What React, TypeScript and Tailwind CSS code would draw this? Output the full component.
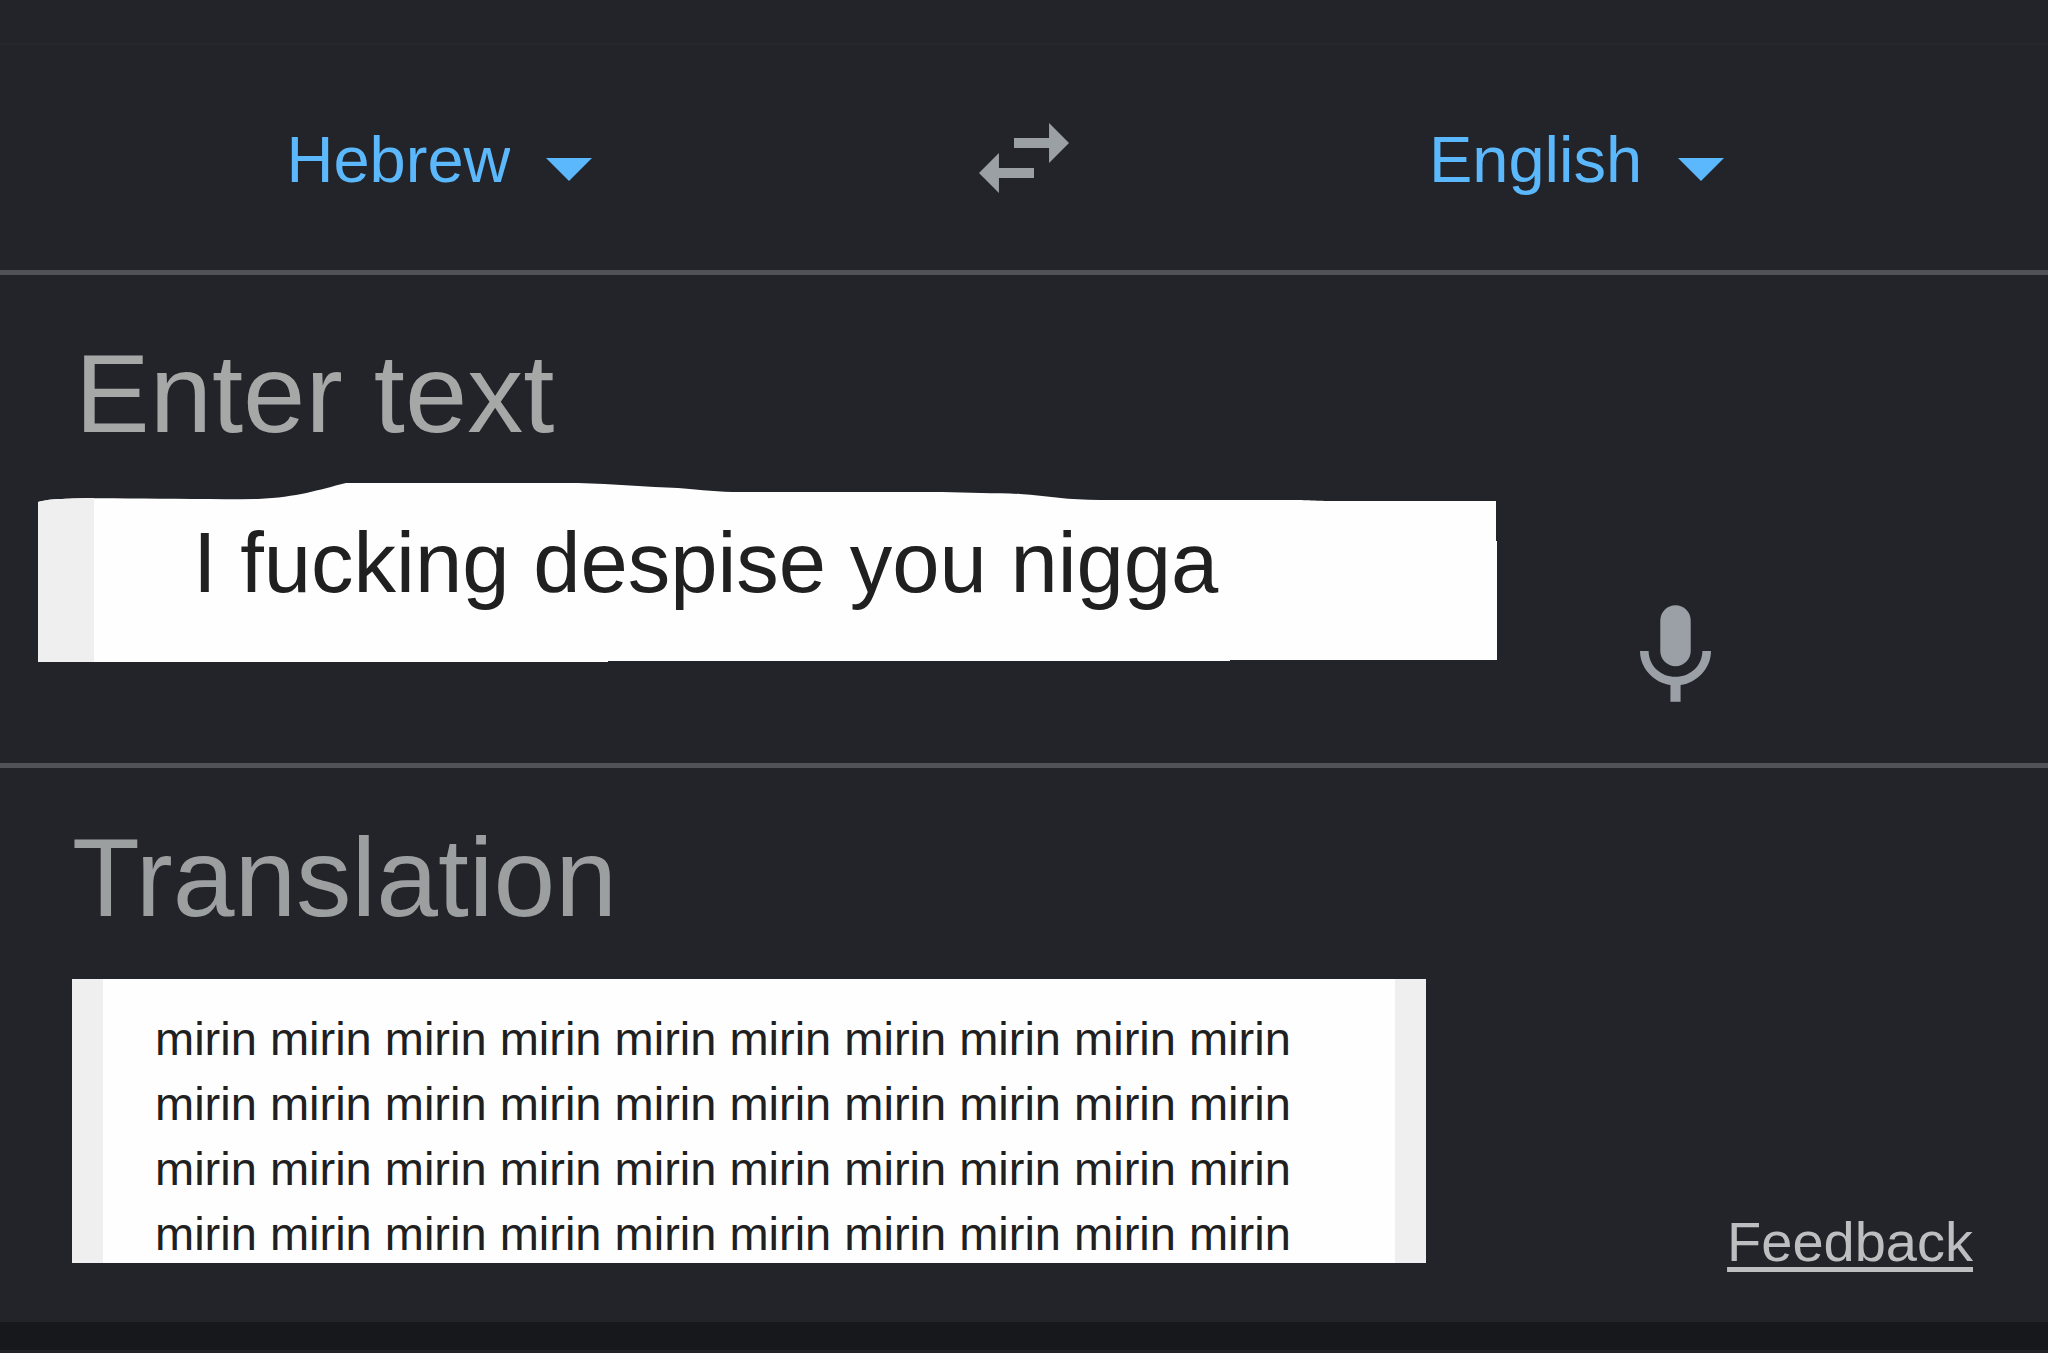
import { useState } from 'react'

const LANGUAGES = ['Hebrew', 'English']

const OUTPUT_LINES = Array.from({ length: 4 }, () => Array(10).fill('mirin').join(' '))

interface LanguageSelectProps {
  id: string
  label: string
  value: string
  onChange: (value: string) => void
}

function LanguageSelect({ id, label, value, onChange }: LanguageSelectProps) {
  return (
    <div className="flex items-center gap-8 text-[#5cb8fc]">
      <label htmlFor={id} className="sr-only">
        {label}
      </label>
      <select
        id={id}
        value={value}
        onChange={(e) => onChange(e.target.value)}
        className="field-sizing-content cursor-pointer appearance-none bg-transparent pt-1 pr-1 text-[65px] leading-[80px] outline-none"
      >
        {LANGUAGES.map((l) => (
          <option key={l} value={l}>
            {l}
          </option>
        ))}
      </select>
      <svg viewBox="0 0 46 23" className="pointer-events-none mt-6 h-[23px] w-[46px] fill-current" aria-hidden="true">
        <path d="M0 0h46L23 23z" />
      </svg>
    </div>
  )
}

function SwapIcon() {
  return (
    <svg viewBox="3 5 18 14" className="h-[70px] w-[90px] fill-current" aria-hidden="true">
      <path d="M6.99 11L3 15l3.99 4v-3H14v-2H6.99v-3zM21 9l-3.99-4v3H10v2h7.01v3L21 9z" />
    </svg>
  )
}

function MicIcon() {
  return (
    <svg viewBox="5 2 14 19" className="h-[97px] w-[71px] fill-current" aria-hidden="true">
      <path d="M12 14c1.66 0 3-1.34 3-3V5c0-1.66-1.34-3-3-3S9 3.34 9 5v6c0 1.66 1.34 3 3 3z" />
      <path d="M17.3 11c0 2.9-2.4 5.1-5.3 5.1S6.7 13.9 6.7 11H5c0 3.41 2.72 6.23 6 6.72V21h2v-3.28c3.28-.48 6-3.3 6-6.72h-1.7z" />
    </svg>
  )
}

// White paper strip with an uneven top edge
function PaperStrip() {
  return (
    <svg
      viewBox="0 0 1459 179"
      preserveAspectRatio="none"
      className="absolute inset-0 h-full w-full"
      aria-hidden="true"
    >
      <path
        fill="#fefefe"
        d="M0 19C8 17 14 16 24 16C60 14 150 17 220 16C260 14 280 7 308 0H540C575 1 610 4 640 5C665 7 680 9 702 9H904C930 10 960 10 982 11C1010 13 1030 17 1062 17H1250C1280 17 1270 18 1300 18H1458V58H1459V177H1192V178H570V179H0z"
      />
      <path fill="#efefef" d="M0 19C8 17 14 16 24 16C36 15 46 15 56 15V179H0z" />
    </svg>
  )
}

export default function App() {
  const [source, setSource] = useState('Hebrew')
  const [target, setTarget] = useState('English')
  const [text, setText] = useState('I fucking despise you nigga')

  const swap = () => {
    setSource(target)
    setTarget(source)
  }

  return (
    <main className="min-h-screen bg-[#232429] font-['Liberation_Sans',Arial,sans-serif]">
      <div className="h-[45px] border-b-2 border-[#25292b]" />

      {/* Languages */}
      <header className="grid h-[230px] grid-cols-[1fr_auto_1fr] items-center border-b-5 border-[#515257]">
        <div className="flex justify-center pr-[100px]">
          <LanguageSelect id="source" label="Source language" value={source} onChange={setSource} />
        </div>
        <button type="button" aria-label="Swap languages" onClick={swap} className="cursor-pointer text-[#9aa0a4]">
          <SwapIcon />
        </button>
        <div className="flex justify-center pl-9">
          <LanguageSelect id="target" label="Target language" value={target} onChange={setTarget} />
        </div>
      </header>

      {/* Input */}
      <section className="border-b-5 border-[#515257] pt-[55px] pb-[61px]">
        <label htmlFor="text" className="block pl-[75px] text-[112px] leading-[128px] text-[#a6a8a8]">
          Enter text
        </label>
        <div className="mt-[25px] flex gap-[143px] pr-[337px] pl-[38px]">
          <div className="relative mb-10 h-[179px] min-w-0 flex-1">
            <PaperStrip />
            <input
              id="text"
              type="text"
              value={text}
              onChange={(e) => setText(e.target.value)}
              className="relative mt-8 h-24 w-full bg-transparent pl-[155px] text-[85px] leading-[96px] text-[#202020] outline-none"
            />
          </div>
          <button type="button" aria-label="Speak" className="shrink-0 cursor-pointer self-end text-[#9aa0a6]">
            <MicIcon />
          </button>
        </div>
      </section>

      {/* Output */}
      <section className="pt-[46px] pr-[75px] pb-12 pl-[72px]">
        <h2 className="text-[111px] leading-[128px] text-[#9c9fa0]">Translation</h2>
        <div className="mt-[37px] flex items-end gap-[301px]">
          <div className="mb-[11px] h-[284px] min-w-0 flex-1 overflow-hidden border-x-31 border-[#efefef] bg-[#fefefe] pt-[27px] pl-[52px] text-[47px] leading-[65px] whitespace-nowrap text-[#202020]">
            {OUTPUT_LINES.map((line, i) => (
              <p key={i}>{line}</p>
            ))}
          </div>
          <a
            href="#feedback"
            className="text-[56px] leading-[64px] text-[#bdbec0] underline decoration-5 underline-offset-6"
          >
            Feedback
          </a>
        </div>
      </section>

      <footer className="h-7 bg-[#17181c]" />
    </main>
  )
}
